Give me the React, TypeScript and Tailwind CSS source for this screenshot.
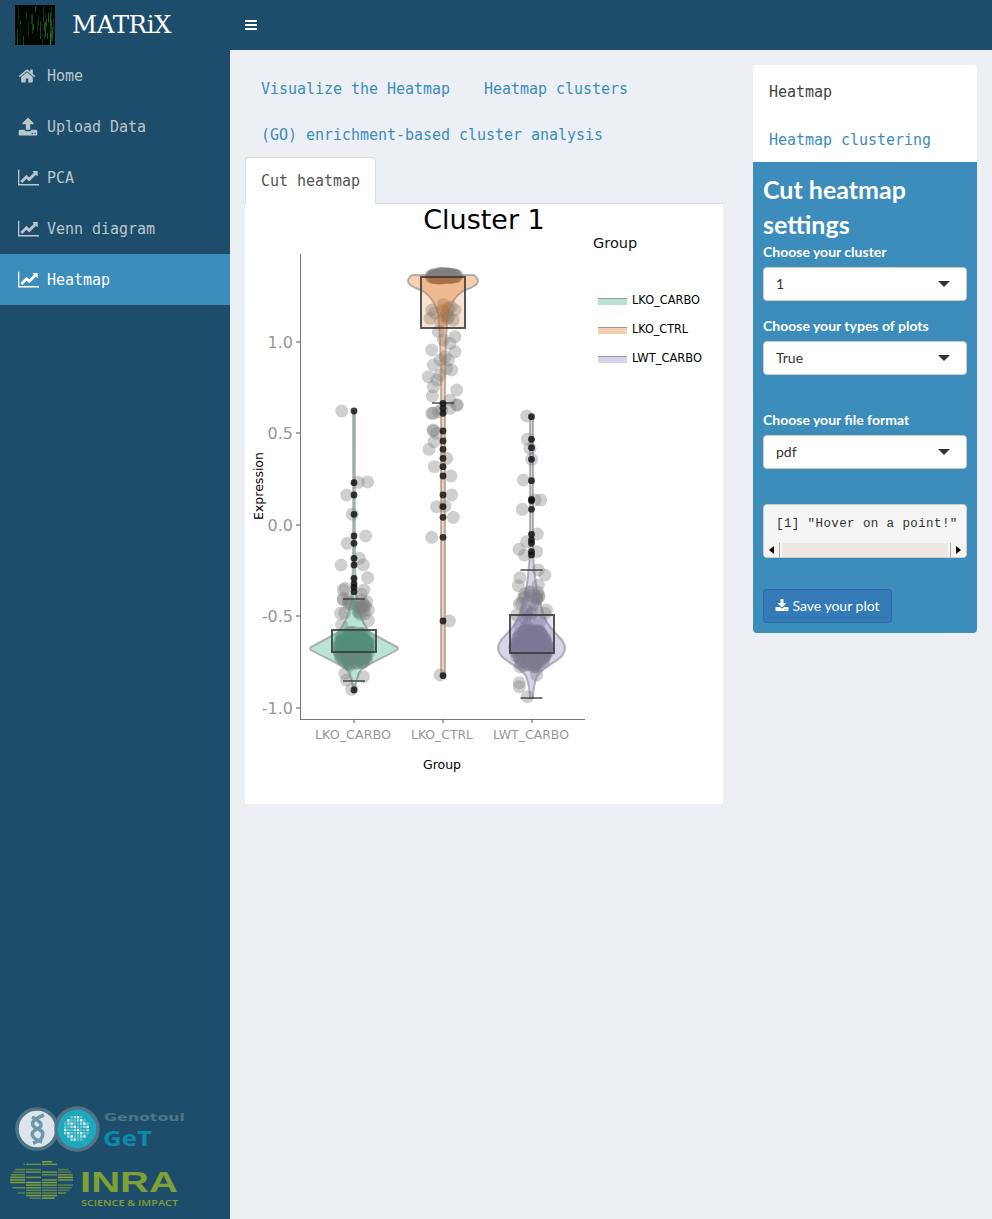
import React from "react";

const mono = "font-['DejaVu_Sans_Mono','Liberation_Mono',monospace]";
const sans = "font-['Lato','Noto_Sans',sans-serif]";

function Fa({ d, vw = 1792, vh = 1792, className }: { d: string; vw?: number; vh?: number; className?: string }) {
  return (
    <svg viewBox={`0 0 ${vw} ${vh}`} className={className} fill="currentColor">
      <path d={d} />
    </svg>
  );
}
const HOME = "M1472 992v480q0 26-19 45t-45 19h-384v-384h-256v384h-384q-26 0-45-19t-19-45v-480q0-1 .5-3t.5-3l575-474 575 474q1 2 1 6zm223-69l-62 74q-8 9-21 11h-3q-13 0-21-7l-692-577-692 577q-12 8-24 7-13-2-21-11l-62-74q-8-10-7-23.5t11-21.5l719-599q32-26 76-26t76 26l244 204v-195q0-14 9-23t23-9h192q14 0 23 9t9 23v408l219 182q10 8 11 21.5t-7 23.5z";
const UPLOAD = "M1344 1472q0-26-19-45t-45-19-45 19-19 45 19 45 45 19 45-19 19-45zm256 0q0-26-19-45t-45-19-45 19-19 45 19 45 45 19 45-19 19-45zm128-224v320q0 40-28 68t-68 28h-1472q-40 0-68-28t-28-68v-320q0-40 28-68t68-28h427q21 56 70.5 92t110.5 36h256q61 0 110.5-36t70.5-92h427q40 0 68 28t28 68zm-325-648q-17 40-59 40h-256v448q0 26-19 45t-45 19h-256q-26 0-45-19t-19-45v-448h-256q-42 0-59-40-17-39 14-69l448-448q18-19 45-19t45 19l448 448q31 30 14 69z";
const CHART = "M2048 1536v128h-2048v-1536h128v1408h1920zm-128-1248v435q0 21-19.5 29.5t-35.5-7.5l-121-121-633 633q-10 10-23 10t-23-10l-233-233-416 416-192-192 585-585q10-10 23-10t23 10l233 233 464-464-121-121q-16-16-7.5-35.5t29.5-19.5h435q14 0 23 9t9 23z";
const DOWNLOAD = "M1344 1344q0-26-19-45t-45-19-45 19-19 45 19 45 45 19 45-19 19-45zm256 0q0-26-19-45t-45-19-45 19-19 45 19 45 45 19 45-19 19-45zm128-224v320q0 40-28 68t-68 28h-1472q-40 0-68-28t-28-68v-320q0-40 28-68t68-28h465l135 136q58 56 136 56t136-56l136-136h464q40 0 68 28t28 68zm-325-569q17 41-14 70l-448 448q-18 19-45 19t-45-19l-448-448q-31-29-14-70 17-39 59-39h256v-448q0-26 19-45t45-19h256q26 0 45 19t19 45v448h256q42 0 59 39z";
const BARS = "M1664 1344v128q0 26-19 45t-45 19h-1408q-26 0-45-19t-19-45v-128q0-26 19-45t45-19h1408q26 0 45 19t19 45zm0-512v128q0 26-19 45t-45 19h-1408q-26 0-45-19t-19-45v-128q0-26 19-45t45-19h1408q26 0 45 19t19 45zm0-512v128q0 26-19 45t-45 19h-1408q-26 0-45-19t-19-45v-128q0-26 19-45t45-19h1408q26 0 45 19t19 45z";

function rng(seed: number) {
  let s = seed;
  return () => {
    s = (s * 16807) % 2147483647;
    return (s - 1) / 2147483646;
  };
}

const zx = (x: number) => x / 3 + 290;
const zy = (y: number) => y / 3 + 400;
const ux = (x: number) => x / 3 + 400;
const uy = (y: number) => y / 3 + 260;

const g1: number[][] = [[155,33],[205,247],[233,246],[170,285],[187,343],[227,408],[172,430],[208,475],[153,495],[220,495],[233,533],[165,565],[160,570],[222,570],[160,600],[230,605],[152,640],[235,630],[235,662],[155,675],[165,820],[220,830],[170,840],[185,868]].map(([x, y]) => [zx(x), zy(y)]);
const g2a: number[][] = [[95,150],[165,150],[90,175],[160,180],[115,215],[165,230],[150,250],[95,270],[165,275],[145,300],[100,315],[155,330],[85,350],[120,345],[100,380],[170,390],[97,408],[150,420],[172,435],[95,460],[125,450],[100,510],[110,520],[130,240],[135,290],[120,300],[110,360],[140,325]].map(([x, y]) => [ux(x), uy(y)]);
const g2b: number[][] = [[430,40],[445,35],[480,25],[500,15],[430,92],[432,125],[417,148],[470,175],[433,200],[483,228],[485,285],[440,320],[465,318],[490,352],[425,412],[478,663],[450,825]].map(([x, y]) => [zx(x), zy(y)]);
const g3: number[][] = [[710,48],[712,118],[720,145],[725,178],[700,240],[735,300],[752,300],[697,328],[742,402],[710,425],[687,448],[740,455],[703,465],[765,525],[745,510],[690,533],[685,557],[745,555],[740,590],[688,612],[765,640],[690,800],[740,825],[688,848],[688,860],[712,890]].map(([x, y]) => [zx(x), zy(y)]);

const b1 = [33,248,285,343,408,430,475,495,535,552,562,575,870].map((y) => [354, zy(y)]);
const b2 = [10,25,40,93,123,148,175,200,228,285,320,352,412,663,827].map((y) => [443, zy(y)]);
const b3 = [50,118,143,178,242,298,302,328,403,420,430,455,465].map((y) => [531.5, zy(y)]);

function cloud(seed: number, n: number, cx: number, cy: number, rx: number, ry: number) {
  const r = rng(seed);
  const out: number[][] = [];
  for (let i = 0; i < n; i++) {
    const a = r() * Math.PI * 2;
    const d = Math.sqrt(r());
    out.push([cx + Math.cos(a) * d * rx, cy + Math.sin(a) * d * ry]);
  }
  return out;
}

const grayPts = [
  ...g1, ...g2a, ...g2b, ...g3,
  ...cloud(11, 150, 354, 648, 16, 18),
  ...cloud(12, 20, 354, 606, 15, 14),
  ...cloud(13, 170, 531.5, 648, 17, 20),
  ...cloud(14, 26, 531, 610, 17, 22),
  ...cloud(15, 90, 443, 276, 14, 2.5),
  ...cloud(16, 10, 443, 314, 12, 10),
];

function Violin({ d, fill }: { d: string; fill: string }) {
  return <path d={d} fill={fill} fillOpacity={0.3} stroke="#7f7f7f" strokeOpacity={0.55} strokeWidth={2} />;
}

function Box({ x, y, w, h, capTop, capBot, cx, fill }: { x: number; y: number; w: number; h: number; capTop: number; capBot?: number; cx: number; fill: string }) {
  return (
    <g stroke="#3a3a3a" strokeWidth={2} strokeOpacity={0.85}>
      <rect x={x} y={y} width={w} height={h} fill={fill} fillOpacity={0.18} />
      <line x1={cx - 11} x2={cx + 11} y1={capTop} y2={capTop} strokeWidth={1.6} />
      {capBot !== undefined && <line x1={cx - 11} x2={cx + 11} y1={capBot} y2={capBot} strokeWidth={1.6} />}
    </g>
  );
}

function Plot() {
  const axisText = "#979797";
  const font = "DejaVu Sans, sans-serif";
  const yTicks: [string, number][] = [["1.0", 342], ["0.5", 433], ["0.0", 525], ["-0.5", 616], ["-1.0", 708]];
  const xTicks: [string, number, number][] = [["LKO_CARBO", 353, 76], ["LKO_CTRL", 442, 62], ["LWT_CARBO", 531, 76]];
  const legend: [string, string, number, number][] = [["LKO_CARBO", "#b7e2d2", 301, 68], ["LKO_CTRL", "#f5cfb0", 330, 56], ["LWT_CARBO", "#d6d4ea", 359, 70]];
  return (
    <svg viewBox="245 204 478 600" className="block h-[600px] w-[478px]">
      <text x="484" y="229" textAnchor="middle" fontFamily={font} fontSize="27" fill="#000">Cluster 1</text>
      <line x1="300.5" x2="300.5" y1="254" y2="719" stroke="#777" />
      <line x1="300" x2="585" y1="719.5" y2="719.5" stroke="#777" />
      {yTicks.map(([t, y]) => (
        <g key={t}>
          <line x1="296" x2="300" y1={y} y2={y} stroke="#555" />
          <text x="293" y={y + 6} textAnchor="end" fontFamily={font} fontSize="16" fill={axisText}>{t}</text>
        </g>
      ))}
      {xTicks.map(([t, x, w]) => (
        <g key={t}>
          <line x1={x + 1} x2={x + 1} y1="719" y2="723" stroke="#555" />
          <text x={x} y="739" textAnchor="middle" fontFamily={font} fontSize="12" textLength={w} lengthAdjust="spacingAndGlyphs" fill={axisText}>{t}</text>
        </g>
      ))}
      <text x="442" y="769" textAnchor="middle" fontFamily={font} fontSize="12.5" fill="#000">Group</text>
      <text x="0" y="0" transform="translate(263 486) rotate(-90)" textAnchor="middle" fontFamily={font} fontSize="12.5" fill="#000">Expression</text>
      <text x="593" y="248" fontFamily={font} fontSize="14.5" fill="#111">Group</text>
      {legend.map(([t, c, y, w]) => (
        <g key={t}>
          <rect x="598" y={y - 3} width="29" height="7" fill={c} />
          <line x1="598" x2="627" y1={y - 2.5} y2={y - 2.5} stroke="#999" />
          <text x="632" y={y + 3} fontFamily={font} fontSize="12" textLength={w} lengthAdjust="spacingAndGlyphs" fill="#000">{t}</text>
        </g>
      ))}
      {grayPts.map(([x, y], i) => (
        <circle key={i} cx={x} cy={y} r={6.5} fill="#808080" fillOpacity={0.38} />
      ))}
      <Violin fill="#1b9e77" d="M353 411 C353 500 354 560 352 590 C351 605 348 622 337 633 L311 647 Q309 648 311 650 C325 658 340 664 347 670 C351 675 352 685 354 690 C356 685 357 675 361 670 C368 664 383 658 397 650 Q399 648 397 647 L371 633 C360 622 357 605 356 590 C354 560 355 500 355 411 Z" />
      <Violin fill="#d95f02" d="M412 275 L474 275 Q481 280 476 285 C470 289 466 290 463 291 C456 296 453 300 449 310 C447 318 447 327 446 340 C445 370 445 400 445 420 L445 676 L441 676 L441 420 C441 400 441 370 440 340 C439 327 439 318 437 310 C433 300 430 296 423 291 C420 290 416 289 410 285 Q405 280 412 275 Z" />
      <Violin fill="#7570b3" d="M530 416 L530 540 C530 570 526 595 522 605 C518 625 510 630 501 640 Q495 648 501 656 C510 664 520 668 526 676 C529 685 530 690 530 698 L533 698 C533 690 534 685 537 676 C543 668 553 664 562 656 Q568 648 562 640 C553 630 545 625 541 605 C537 595 533 570 533 540 L533 416 Z" />
      <Box cx={354} x={332} y={630} w={44} h={22} capTop={599} capBot={681} fill="#1b9e77" />
      <Box cx={443} x={421} y={277} w={44} h={51} capTop={403} fill="#d95f02" />
      <Box cx={531.5} x={510} y={615} w={44} h={38} capTop={570} capBot={698} fill="#7570b3" />
      {[...b1, ...b2, ...b3].map(([x, y], i) => (
        <circle key={i} cx={x} cy={y} r={3.4} fill="#0c0c0c" fillOpacity={0.8} />
      ))}
    </svg>
  );
}

function MatrixLogo() {
  const r = rng(7);
  const lines = Array.from({ length: 40 }, () => {
    const x = Math.round(r() * 40) + 0.5;
    const y = r() * 32;
    return { x, y, l: 4 + r() * 16, o: 0.15 + r() * 0.45 };
  });
  return (
    <svg width="40" height="40" viewBox="0 0 40 40" className="shrink-0">
      <rect width="40" height="40" fill="#020602" />
      {lines.map((l, i) => (
        <line key={i} x1={l.x} x2={l.x} y1={l.y} y2={l.y + l.l} stroke="#2f9a2a" strokeOpacity={l.o} strokeWidth="1" />
      ))}
    </svg>
  );
}

function GetLogo() {
  const cells: number[][] = [];
  for (let i = 0; i < 8; i++) for (let j = 0; j < 8; j++) {
    const dx = i - 3.5, dy = j - 3.5;
    if (dx * dx + dy * dy < 15) cells.push([64 + i * 3.2, 1116 + j * 3.2, (i * 3 + j * 5) % 4]);
  }
  return (
    <svg viewBox="0 1100 230 55" className="block h-[55px] w-[230px]">
      <circle cx="37" cy="1129" r="20" fill="#dce6ea" stroke="#4f7488" strokeWidth="3.5" />
      <path d="M44 1115 C30 1120 30 1126 38 1129 C46 1132 44 1140 33 1143 M32 1117 C42 1122 44 1126 37 1129 C30 1132 30 1138 42 1142" fill="none" stroke="#6f97aa" strokeWidth="3.5" />
      <circle cx="77" cy="1129" r="21" fill="#1fa7bb" stroke="#4f7488" strokeWidth="3.5" />
      {cells.map(([x, y, k], i) => (
        <rect key={i} x={x} y={y} width="2.4" height="2.4" fill="#fff" fillOpacity={k === 0 ? 0.95 : k === 1 ? 0.6 : 0.35} />
      ))}
      <text x="104" y="1121" fontFamily="DejaVu Sans, sans-serif" fontWeight="700" fontSize="10" fill="#4f7488" textLength="81" lengthAdjust="spacingAndGlyphs">Genotoul</text>
      <text x="103" y="1146" fontFamily="Open Sans, sans-serif" fontWeight="700" fontSize="21" fill="#0a8bab" textLength="49" lengthAdjust="spacingAndGlyphs">GeT</text>
    </svg>
  );
}

function InraLogo() {
  const r = rng(29);
  const rows: { x: number; y: number; w: number; o: number }[] = [];
  for (let y = 1161; y < 1199; y += 2.6) {
    const dy = (y - 1179.5) / 19.5;
    const half = 32 * Math.sqrt(Math.max(0, 1 - dy * dy));
    for (let c = 0; c < 4; c++) {
      const x0 = -32 + c * 16;
      const x1 = x0 + 15;
      const a = Math.max(x0, -half);
      const b = Math.min(x1, half);
      if (b > a && r() > 0.2) rows.push({ x: 42 + a, y, w: b - a, o: 0.5 + r() * 0.5 });
    }
  }
  return (
    <svg viewBox="0 1155 230 55" className="block h-[55px] w-[230px]">
      {rows.map((s, i) => (
        <rect key={i} x={s.x} y={s.y} width={s.w} height="1.5" fill="#86a83a" fillOpacity={s.o} />
      ))}
      <text x="80" y="1192" fontFamily="Liberation Sans, sans-serif" fontWeight="700" fontSize="30" fill="#7fa035" textLength="98" lengthAdjust="spacingAndGlyphs">INRA</text>
      <text x="81" y="1206" fontFamily="Open Sans, sans-serif" fontWeight="600" fontSize="8.5" fill="#7fa035" textLength="97" lengthAdjust="spacingAndGlyphs">SCIENCE &amp; IMPACT</text>
    </svg>
  );
}

function NavItem({ icon, label, active }: { icon: React.ReactNode; label: string; active?: boolean }) {
  return (
    <div className={`flex h-[51px] items-center pl-[18px] text-[15px] tracking-[-0.03px] ${mono} ${active ? "bg-[#3c8dbc] text-white" : "text-[#b8c7ce]"}`}>
      <span className="flex w-[29px]">{icon}</span>
      <span className="mt-[2px]">{label}</span>
    </div>
  );
}

function Field({ label, value, mb }: { label: string; value: string; mb: string }) {
  return (
    <div className={mb}>
      <div className="mb-[5px] text-[14px] leading-[20px] font-bold text-white">{label}</div>
      <div className="flex h-[34px] items-center justify-between rounded-[4px] border border-[#ccc] bg-white pr-[16px] pl-[12px] text-[14px] leading-[30px] text-[#333]">
        <span>{value}</span>
        <span className="h-0 w-0 border-x-[6px] border-t-[6px] border-x-transparent border-t-[#333]" />
      </div>
    </div>
  );
}

function TopLink({ children, extra }: { children: React.ReactNode; extra?: string }) {
  return <div className={`h-[46px] px-[16px] pt-[1px] leading-[46px] whitespace-nowrap ${extra ?? ""}`}>{children}</div>;
}

const chartIcon = <Fa d={CHART} vw={2048} className="h-[21px] w-[21px]" />;

export default function App() {
  return (
    <div className={`flex min-h-[1219px] w-[992px] flex-col bg-[#ecf0f5] ${sans}`}>
      <header className="flex h-[50px] bg-[#1e4d6b]">
        <div className="flex w-[230px] items-center pl-[15px]">
          <MatrixLogo />
          <span className="ml-[17px] font-['DejaVu_Serif',serif] text-[24.5px] font-extralight tracking-[-0.4px] text-white">MATRiX</span>
        </div>
        <div className="flex items-center pl-[14px] text-white">
          <Fa d={BARS} className="h-[14px] w-[14px]" />
        </div>
      </header>
      <div className="flex flex-1">
        <aside className="flex w-[230px] flex-col bg-[#1e4d6b]">
          <NavItem icon={<Fa d={HOME} className="h-[18px] w-[18px]" />} label="Home" />
          <NavItem icon={<Fa d={UPLOAD} className="h-[20px] w-[20px]" />} label="Upload Data" />
          <NavItem icon={chartIcon} label="PCA" />
          <NavItem icon={chartIcon} label="Venn diagram" />
          <NavItem icon={chartIcon} label="Heatmap" active />
          <div className="mt-auto pb-[9px]">
            <GetLogo />
            <InraLogo />
          </div>
        </aside>
        <main className="flex flex-1 items-start pt-[15px] pl-[15px]">
          <div className="w-[478px]">
            <div className={`flex flex-wrap text-[15px] tracking-[-0.03px] text-[#3c8dbc] ${mono}`}>
              <TopLink>Visualize the Heatmap</TopLink>
              <TopLink extra="ml-[2px]">Heatmap clusters</TopLink>
              <TopLink>(GO) enrichment-based cluster analysis</TopLink>
            </div>
            <div className={`-mb-px flex ${mono}`}>
              <div className="relative h-[47px] rounded-t-[4px] border border-b-0 border-[#ddd] bg-white px-[15px] pt-[1px] text-[15px] leading-[45px] tracking-[-0.03px] text-[#555]">Cut heatmap</div>
            </div>
            <div className="border-t border-[#ddd] bg-white">
              <Plot />
            </div>
          </div>
          <div className="ml-[30px] w-[224px] overflow-hidden rounded-[4px]">
            <div className={`h-[97px] bg-white px-[16px] text-[15px] tracking-[-0.03px] ${mono}`}>
              <div className="h-[48px] pt-[4px] leading-[46px] text-[#444]">Heatmap</div>
              <div className="leading-[54px] text-[#3c8dbc]">Heatmap clustering</div>
            </div>
            <div className="h-[471px] bg-[#3c8dbc] px-[10px] pt-[10px]">
              <div className="text-[25px] leading-[35px] font-bold text-white">Cut heatmap settings</div>
              <Field label="Choose your cluster" value="1" mb="mb-[15px]" />
              <Field label="Choose your types of plots" value="True" mb="mb-[35px]" />
              <Field label="Choose your file format" value="pdf" mb="mb-[35px]" />
              <div className="h-[54px] overflow-hidden rounded-[4px] border border-[#ccc] bg-[#f5f5f5]">
                <div className="h-[37px] pt-[10px] pl-[12px] font-['Liberation_Mono',monospace] text-[12.5px] leading-[18px] tracking-[0.4px] whitespace-nowrap text-[#333]">[1] "Hover on a point!"</div>
                <div className="flex h-[16px] border-y border-t-[#f8f6f2] border-b-[#999] bg-[#ede9e3]">
                  <span className="flex w-[16px] items-center justify-center border-r border-[#aaa] bg-[#f5f3ef]">
                    <span className="h-0 w-0 border-y-[4px] border-r-[5px] border-y-transparent border-r-black" />
                  </span>
                  <span className="flex-1 border-x-2 border-x-[#f8f6f2] bg-[#ece8e2]" />
                  <span className="flex w-[16px] items-center justify-center border-l border-[#aaa] bg-[#f5f3ef]">
                    <span className="h-0 w-0 border-y-[4px] border-l-[5px] border-y-transparent border-l-black" />
                  </span>
                </div>
              </div>
              <div className="mt-[31px] flex h-[34px] w-[129px] items-center justify-center gap-[3px] rounded-[3px] border border-[#2e6da4] bg-[#337ab7] text-[14px] text-white">
                <Fa d={DOWNLOAD} className="h-[14px] w-[14px]" />
                <span className="-mt-[2px]">Save your plot</span>
              </div>
            </div>
          </div>
        </main>
      </div>
    </div>
  );
}
